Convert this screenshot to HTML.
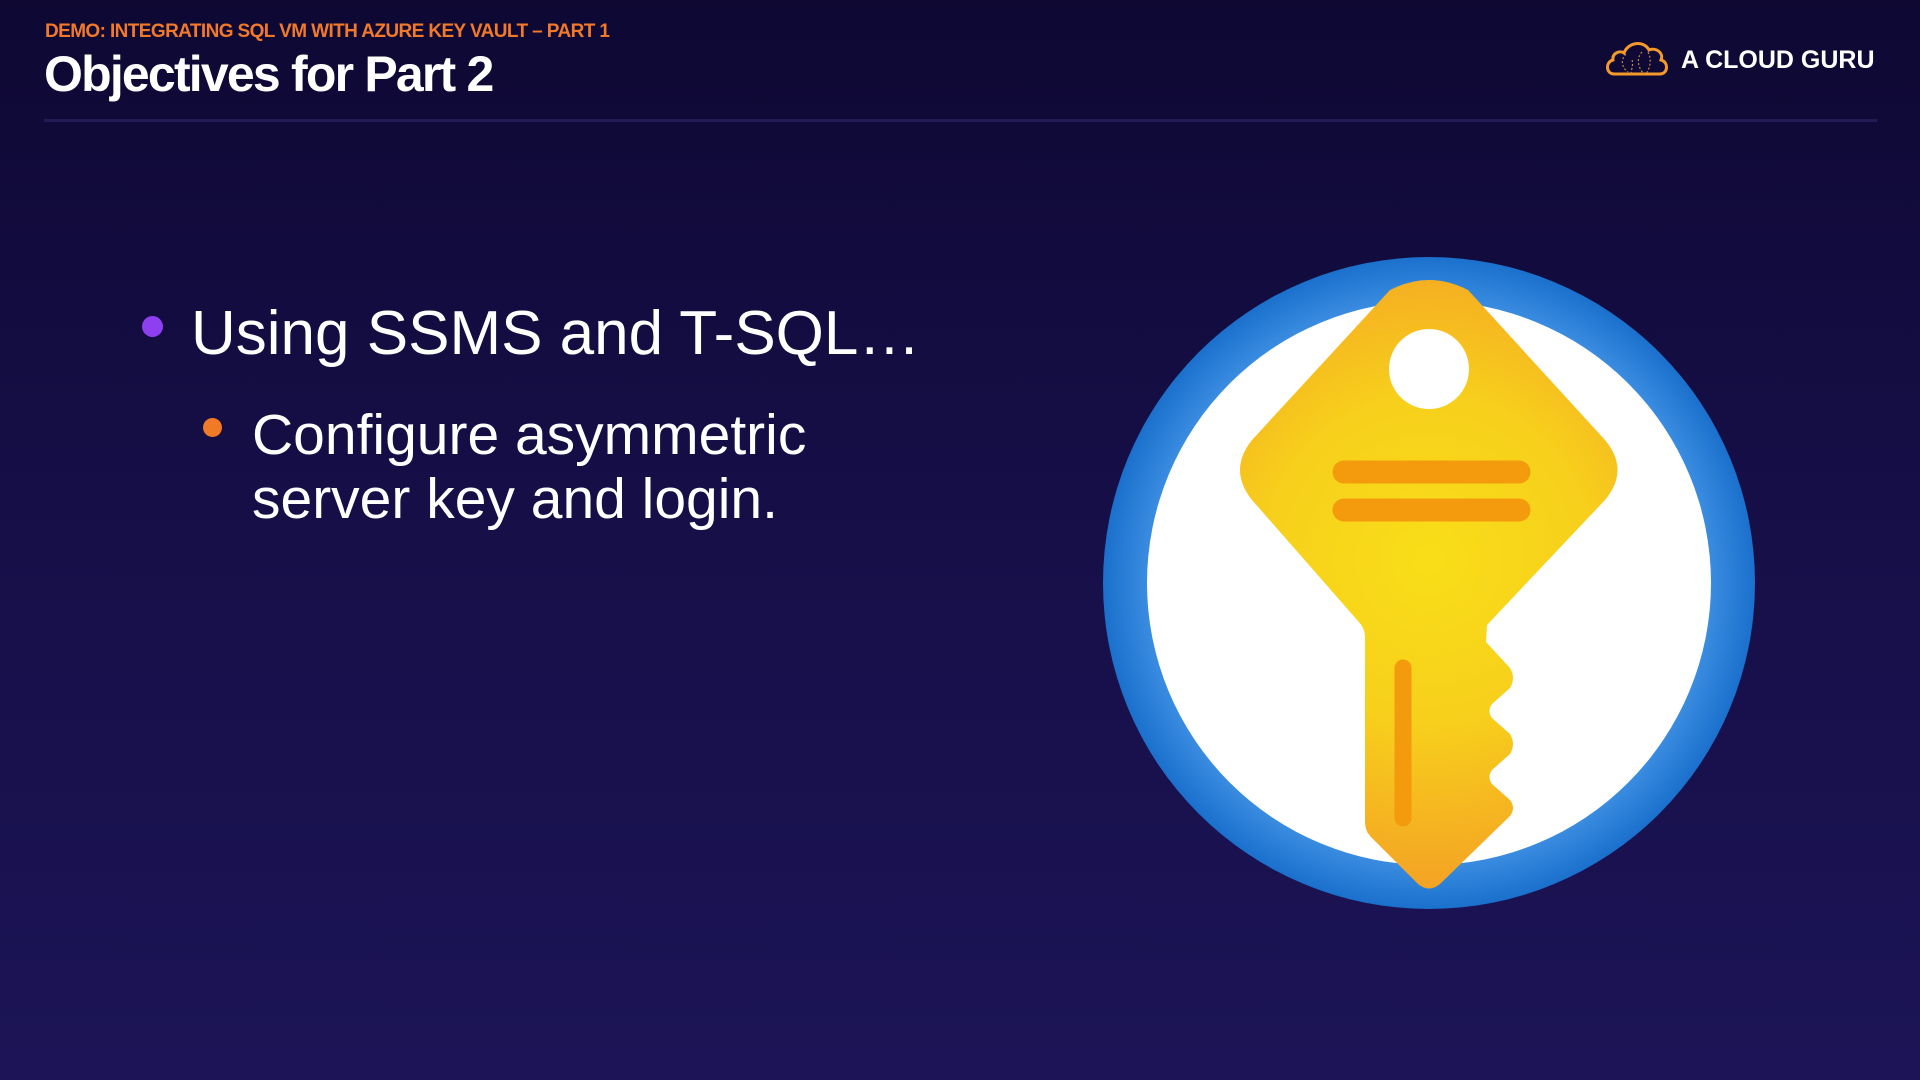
<!DOCTYPE html>
<html><head><meta charset="utf-8"><style>
html,body{margin:0;padding:0}
body{width:1920px;height:1080px;overflow:hidden;position:relative;background:linear-gradient(180deg,#0e0833 0%,#150e45 40%,#1c1456 100%);font-family:"Liberation Sans",sans-serif;color:#fff}
.sub{position:absolute;left:45px;top:21px;font-size:19px;font-weight:bold;color:#f2792a;letter-spacing:-0.6px}
.title{position:absolute;left:44px;top:45px;font-size:50px;font-weight:bold;letter-spacing:-1.8px}
.line{position:absolute;left:44px;top:119px;width:1833px;height:3px;background:#231b55}
.logo{position:absolute;left:1681px;top:46px;font-size:25px;font-weight:bold}
.b1{position:absolute;left:191px;top:298px;font-size:62px}
.d1{position:absolute;left:142px;top:316px;width:21px;height:21px;border-radius:50%;background:#8e3ff0}
.b2{position:absolute;left:252px;top:403px;font-size:57px;line-height:64px}
.d2{position:absolute;left:203px;top:418px;width:19px;height:19px;border-radius:50%;background:#f07a25}
</style></head><body>
<div class="sub">DEMO: INTEGRATING SQL VM WITH AZURE KEY VAULT – PART 1</div>
<div class="title">Objectives for Part 2</div>
<div class="line"></div>
<svg style="position:absolute;left:1604px;top:38px" width="66" height="40" viewBox="0 0 66 40">
<path d="M10 36 C2 36 1 24 9 22 C8 15 16 12 20 15 C24 4 40 2 45 12 C52 9 60 15 57 22 C65 24 64 36 56 36 Z" fill="none" stroke="#f39a2a" stroke-width="3"/>
<path d="M22 16 C16 22 18 30 24 34 M28 22 C30 28 26 32 28 36 M38 14 C32 20 34 30 40 36 M44 14 C48 22 46 30 42 36" fill="none" stroke="#c8873a" stroke-width="1.2" stroke-dasharray="2 2"/>
</svg>
<div class="logo">A CLOUD GURU</div>
<div class="d1"></div>
<div class="b1">Using SSMS and T-SQL…</div>
<div class="d2"></div>
<div class="b2">Configure asymmetric<br>server key and login.</div>
<svg style="position:absolute;left:0;top:0" width="1920" height="1080">
<defs>
<radialGradient id="ring" cx="0.5" cy="0.5" r="0.5">
<stop offset="0.85" stop-color="#3d8fe2"/><stop offset="1" stop-color="#1a70cc"/>
</radialGradient>
<radialGradient id="key" cx="1429" cy="560" r="330" gradientUnits="userSpaceOnUse">
<stop offset="0" stop-color="#f8de18"/><stop offset="0.5" stop-color="#f7cf1c"/><stop offset="1" stop-color="#f4a224"/>
</radialGradient>
</defs>
<circle cx="1429" cy="583" r="326" fill="url(#ring)"/>
<circle cx="1429" cy="583" r="282" fill="#fff"/>
<path d="M1390 290 Q1429 270 1468 290 L1605 440 Q1630 470 1605 500 L1487 625 L1486 642 L1510 668 Q1516 678 1510 688 L1492 704 Q1487 711 1492 718 L1510 734 Q1516 744 1510 754 L1492 770 Q1487 777 1492 784 L1510 800 Q1516 808 1510 816 L1440 884 Q1429 893 1418 884 L1370 836 Q1365 830 1365 822 L1365 637 Q1365 628 1358 621 L1252 500 Q1228 470 1252 440 Z" fill="url(#key)"/>
<ellipse cx="1429" cy="369" rx="40" ry="40" fill="#fff"/>
<line x1="1344" y1="472" x2="1519" y2="472" stroke="#f39a0d" stroke-width="23" stroke-linecap="round"/>
<line x1="1344" y1="510" x2="1519" y2="510" stroke="#f39a0d" stroke-width="23" stroke-linecap="round"/>
<line x1="1403" y1="668" x2="1403" y2="818" stroke="#f39a0d" stroke-width="17" stroke-linecap="round"/>
</svg>
</body></html>
